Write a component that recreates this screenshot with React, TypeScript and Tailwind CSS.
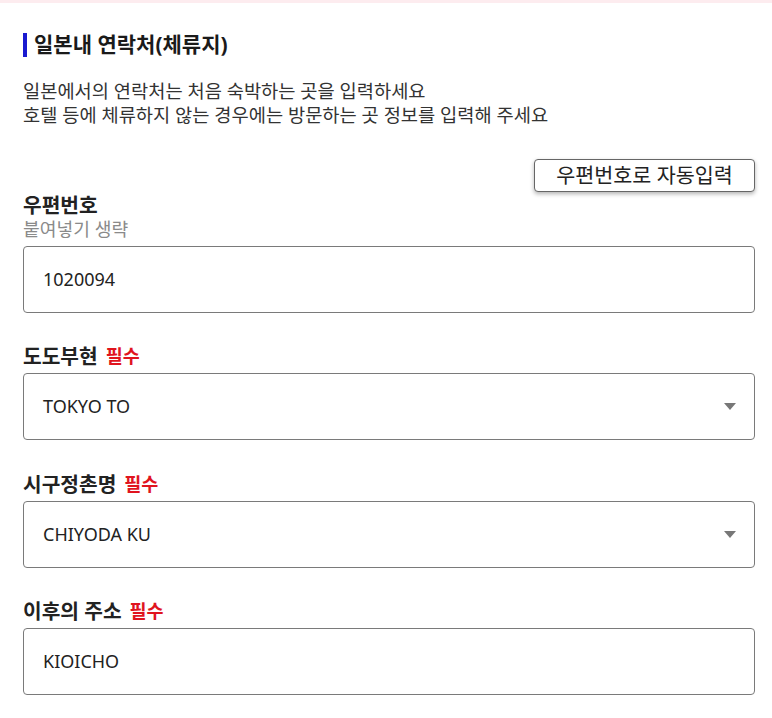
import React from 'react';

const FONT = { fontFamily: '"Noto Sans", "Noto Sans CJK KR", sans-serif' };

function Label({ text, required, sub }: { text: string; required?: boolean; sub?: string }) {
  return (
    <div>
      <div className="flex items-center h-[24px] leading-[24px]">
        <span className="text-[20.3px] font-bold text-[#222]">{text}</span>
        {required && <span className="ml-[8px] text-[18.5px] font-bold text-[#e0141e]">필수</span>}
      </div>
      {sub && <p className="text-[18.2px] leading-[24px] text-[#8a8a8a]">{sub}</p>}
    </div>
  );
}

function Field({ value, select }: { value: string; select?: boolean }) {
  return (
    <div className="flex items-center justify-between h-[67px] rounded-[4px] border border-[#7a7a7a] bg-white pl-[19px] pr-[18px]">
      <span className="text-[18px] text-[#222]">{value}</span>
      {select && (
        <svg width="12" height="7" viewBox="0 0 12 7">
          <path d="M0 0h12L6 7z" fill="#777" />
        </svg>
      )}
    </div>
  );
}

export default function App() {
  return (
    <div className="min-h-screen bg-white" style={FONT}>
      <div className="h-[3px] bg-[#fdecef]" />
      <div className="pl-[23px] pr-[17px] pb-8">
        {/* heading */}
        <div className="mt-[30px] flex items-center h-[24px] border-l-4 border-[#1a1ad0] pl-[7px]">
          <h2 className="text-[21px] font-bold text-[#1a1a1a]">일본내 연락처(체류지)</h2>
        </div>

        <div className="mt-[22px] text-[18.7px] leading-[24px] text-[#333]">
          <p>일본에서의 연락처는 처음 숙박하는 곳을 입력하세요</p>
          <p>호텔 등에 체류하지 않는 경우에는 방문하는 곳 정보를 입력해 주세요</p>
        </div>

        <div className="mt-[32px] flex justify-end">
          <button className="w-[221px] h-[33px] rounded-[4px] border border-[#666] bg-white text-[20.7px] text-[#222] shadow-[0_2px_4px_rgba(0,0,0,0.3)]">
            우편번호로 자동입력
          </button>
        </div>

        <div className="mt-[1px]">
          <Label text="우편번호" sub="붙여넣기 생략" />
          <div className="mt-[5px]">
            <Field value="1020094" />
          </div>
        </div>

        <div className="mt-[31px]">
          <Label text="도도부현" required />
          <div className="mt-[5px]">
            <Field value="TOKYO TO" select />
          </div>
        </div>

        <div className="mt-[32px]">
          <Label text="시구정촌명" required />
          <div className="mt-[5px]">
            <Field value="CHIYODA KU" select />
          </div>
        </div>

        <div className="mt-[31px]">
          <Label text="이후의 주소" required />
          <div className="mt-[5px]">
            <Field value="KIOICHO" />
          </div>
        </div>
      </div>
    </div>
  );
}
